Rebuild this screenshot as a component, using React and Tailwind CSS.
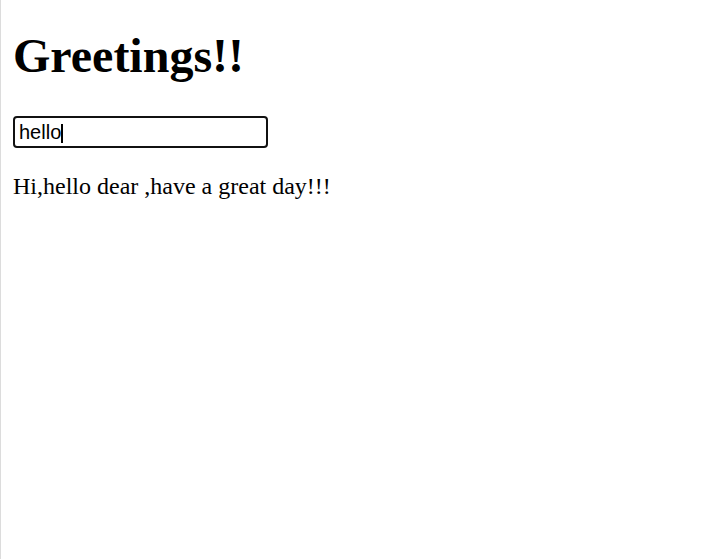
import { useState } from 'react';

function App() {
    const [name, setName] = useState('hello');

    return (
        <div className="min-h-screen bg-white border-l border-[#dcdcdc] px-[12px] pt-[29px] text-black font-['Liberation_Serif',serif]">
            <h1 className="text-[48px] font-bold leading-[53px] mb-[34px]">Greetings!!</h1>
            <div className="relative w-[255px]">
                <input
                    className="block w-[255px] h-[32px] border-2 border-[#111] rounded-[4px] px-[4px] text-[20px] font-['Liberation_Sans',Arial,sans-serif] text-black outline-none caret-transparent"
                    value={name}
                    onChange={(e) => setName(e.target.value)}
                />
                {/* fake caret so the picture shows focus */}
                <span className="absolute left-[48px] top-[8px] w-[2px] h-[19px] bg-black"></span>
            </div>
            <p className="mt-[20px] text-[24px]">Hi,{name} dear ,have a great day!!!</p>
        </div>
    );
}

export default App;
